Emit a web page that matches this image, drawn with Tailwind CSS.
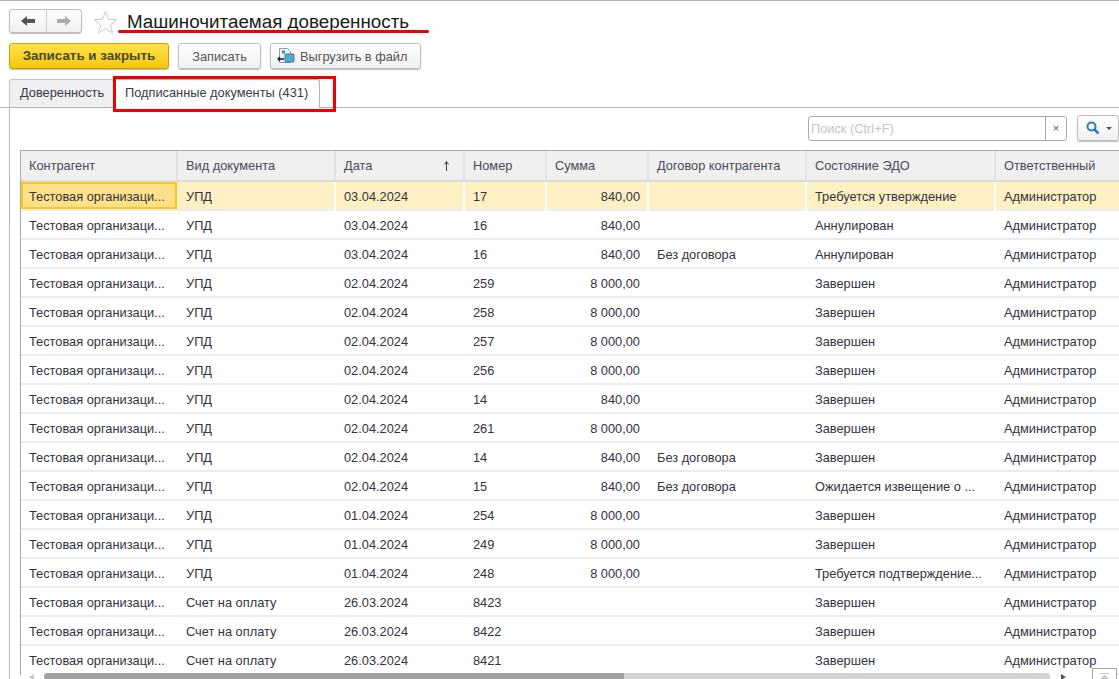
<!DOCTYPE html>
<html lang="en">
<head>
  <meta charset="UTF-8">
  <title>Машиночитаемая доверенность</title>
  <script src="https://cdn.jsdelivr.net/npm/@tailwindcss/browser@4"></script>
</head>
<body class="w-[1119px] h-[679px] overflow-hidden bg-white text-[12.8px] text-[#3a3a48] font-['Liberation_Sans',Arial,sans-serif]">
  <div class="relative h-full border-t border-[#b0b0b0]">
    <!-- Title row -->
    <div class="flex items-start pl-[9px] pt-[8px] h-[42px]">
      <div class="flex w-[73px] h-[24px] border border-[#bdbdbd] rounded-[3px] shadow-[0_1px_1px_#bbb] bg-gradient-to-b from-white to-[#f0f0f0]">
        <div class="w-[37px] flex items-center justify-center border-r border-[#cfcfcf]">
          <svg width="16" height="12" viewBox="0 0 16 12"><path d="M1 6l6-5v3h8v4H7v3z" fill="#555"/></svg>
        </div>
        <div class="flex-1 flex items-center justify-center">
          <svg width="16" height="12" viewBox="0 0 16 12"><path d="M15 6L9 1v3H1v4h8v3z" fill="#aaa"/></svg>
        </div>
      </div>
      <svg class="ml-[11px] mt-px" width="25" height="24" viewBox="0 0 25 24"><path d="M12.500 1.500l3 7.700 8.300.5-6.400 5.200 2.100 8-7-4.400-7 4.400 2.100-8L1.200 9.700l8.300-.5z" fill="#fff" stroke="#c9c9c9"/></svg>
      <h1 class="ml-[9px] text-[18.800px] leading-[26px] text-[#1a1a1a]">Машиночитаемая доверенность</h1>
    </div>

    <!-- Command bar -->
    <div class="flex items-center pl-[9px] h-[26px]">
      <button class="w-[160px] h-[26px] pt-px rounded-[3px] border border-[#c9a400] bg-gradient-to-b from-[#ffe347] to-[#f5c800] font-bold text-[13.400px] text-[#4a4a2a] shadow-[0_1px_1px_#bbb]">Записать и закрыть</button>
      <button class="ml-[9px] w-[83px] h-[26px] pt-px rounded-[3px] border border-[#bdbdbd] bg-gradient-to-b from-white to-[#f0f0f0] shadow-[0_1px_1px_#bbb] text-[#555]">Записать</button>
      <button class="ml-[9px] w-[151px] h-[26px] rounded-[3px] border border-[#bdbdbd] bg-gradient-to-b from-white to-[#f0f0f0] shadow-[0_1px_1px_#bbb] flex items-center pl-[6px] gap-[5px] whitespace-nowrap text-[#555]">
        <svg width="18" height="18" viewBox="0 0 18 18">
          <path d="M2.500 1.500h8l3 3v11h-11z" fill="#eef3f8" stroke="#8a9bb0"/>
          <rect x="8" y="7" width="9" height="8" rx="1" fill="#5aa7d6" stroke="#2f78a8"/>
          <path d="M1 12h6M3 10l-2 2 2 2" fill="none" stroke="#222" stroke-width="1.300"/>
          <path d="M5 3.500h3v3H5z" fill="#4aa04a"/>
        </svg>
        <span class="pt-px">Выгрузить в файл</span>
      </button>
    </div>

    <!-- Tabs -->
    <div class="flex items-end pl-[9px] mt-[9px] h-[30px] border-b border-[#b5b5b5]">
      <div class="w-[105px] h-[28px] flex items-center pl-[10px] pb-[2px] border border-b-0 border-[#c4c4c4] rounded-t-[3px] bg-[#f0f0f0] whitespace-nowrap">Доверенность</div>
      <div class="w-[206px] h-[29px] -mb-px flex items-center pl-[10px] pb-[2px] border border-b-0 border-[#b5b5b5] rounded-t-[3px] bg-white whitespace-nowrap">Подписанные документы (431)</div>
    </div>

    <!-- Tab panel -->
    <div class="ml-[9px] h-[572px] border-l border-[#b5b5b5] pl-[10px]">
      <div class="flex items-center justify-end h-[42px] pb-[2px]">
        <div class="flex w-[259px] h-[25px] border border-[#aaa] rounded-[3px]">
          <span class="flex-1 pl-[2px] leading-[23px] text-[#c4c4cc]">Поиск (Ctrl+F)</span>
          <span class="w-[21px] border-l border-[#aaa] flex items-center justify-center text-[#555] text-[11px]">×</span>
        </div>
        <div class="ml-[10px] w-[42px] h-[26px] rounded-[3px] border border-[#bdbdbd] bg-gradient-to-b from-white to-[#f0f0f0] shadow-[0_1px_1px_#bbb] flex items-center pl-[8px] gap-[6px]">
          <svg width="14" height="14" viewBox="0 0 14 14"><circle cx="5.500" cy="5.500" r="4" fill="none" stroke="#1f7fc0" stroke-width="2"/><path d="M8.500 8.500l4 4" stroke="#1f7fc0" stroke-width="2.500"/></svg>
          <svg width="6" height="3" viewBox="0 0 6 3"><path d="M0 0h6L3 3z" fill="#555"/></svg>
        </div>
      </div>

      <!-- Table -->
      <div class="border-t border-l border-[#a8a8a8] overflow-hidden text-[#333340]">
        <div class="grid grid-cols-[157px_158px_129px_82px_102px_158px_189px_140px] h-[31px] bg-[#f0f0f0] border-b-2 border-[#dcdcdc] text-[#4a4a58]">
          <div class="pl-[8px] leading-[29px] border-r-2 border-[#e2e2e2]">Контрагент</div>
          <div class="pl-[8px] leading-[29px] border-r-2 border-[#e2e2e2]">Вид документа</div>
          <div class="pl-[8px] pr-[14px] leading-[29px] border-r-2 border-[#e2e2e2] flex justify-between items-center">Дата
            <svg width="5" height="10" viewBox="0 0 5 10"><path d="M2.500 10V1M.5 3.500L2.500 .5l2 3" fill="none" stroke="#444"/></svg>
          </div>
          <div class="pl-[8px] leading-[29px] border-r-2 border-[#e2e2e2]">Номер</div>
          <div class="pl-[8px] leading-[29px] border-r-2 border-[#e2e2e2]">Сумма</div>
          <div class="pl-[8px] leading-[29px] border-r-2 border-[#e2e2e2]">Договор контрагента</div>
          <div class="pl-[8px] leading-[29px] border-r-2 border-[#e2e2e2]">Состояние ЭДО</div>
          <div class="pl-[8px] leading-[29px]">Ответственный</div>
        </div>
        <div id="rows"></div>
      </div>
    </div>

    <!-- Red annotations -->
    <div class="absolute left-[118px] top-[29px] w-[311px] h-[3px] bg-[#f00000] rounded-full"></div>
    <div class="absolute left-[113px] top-[75px] w-[223px] h-[36px] border-[3px] border-[#f00000]"></div>

    <!-- Horizontal scrollbar -->
    <div class="absolute left-[21px] top-[672px] w-[1072px] h-[7px] bg-white">
      <svg class="absolute left-[8px] top-[1px]" width="5" height="6" viewBox="0 0 5 6"><path d="M5 0v6L0 3z" fill="#c8c8c8"/></svg>
      <div class="absolute left-[23px] top-0 w-[580px] h-[7px] bg-[#a0a0a0] rounded-l-[4px]"></div>
      <div class="absolute left-[603px] top-0 w-[426px] h-[7px] bg-[#d2d2d2] rounded-r-[4px]"></div>
      <svg class="absolute left-[1040px] top-[1px]" width="5" height="6" viewBox="0 0 5 6"><path d="M0 0v6l5-3z" fill="#555"/></svg>
    </div>
    <div class="absolute left-[1092px] top-[667px] w-[25px] h-[12px] bg-white border border-b-0 border-[#a8a8a8] flex justify-center pt-[4px]">
      <svg width="11" height="8" viewBox="0 0 11 8"><path d="M1 .5h9M5.500 2L1 7h9z" fill="#c8c8c8" stroke="#c8c8c8"/></svg>
    </div>
  </div>

  <script>
    const org = 'Тестовая организаци...'
    const rows = [
      ['УПД', '03.04.2024', '17', '840,00', '', 'Требуется утверждение'],
      ['УПД', '03.04.2024', '16', '840,00', '', 'Аннулирован'],
      ['УПД', '03.04.2024', '16', '840,00', 'Без договора', 'Аннулирован'],
      ['УПД', '02.04.2024', '259', '8 000,00', '', 'Завершен'],
      ['УПД', '02.04.2024', '258', '8 000,00', '', 'Завершен'],
      ['УПД', '02.04.2024', '257', '8 000,00', '', 'Завершен'],
      ['УПД', '02.04.2024', '256', '8 000,00', '', 'Завершен'],
      ['УПД', '02.04.2024', '14', '840,00', '', 'Завершен'],
      ['УПД', '02.04.2024', '261', '8 000,00', '', 'Завершен'],
      ['УПД', '02.04.2024', '14', '840,00', 'Без договора', 'Завершен'],
      ['УПД', '02.04.2024', '15', '840,00', 'Без договора', 'Ожидается извещение о ...'],
      ['УПД', '01.04.2024', '254', '8 000,00', '', 'Завершен'],
      ['УПД', '01.04.2024', '249', '8 000,00', '', 'Завершен'],
      ['УПД', '01.04.2024', '248', '8 000,00', '', 'Требуется подтверждение...'],
      ['Счет на оплату', '26.03.2024', '8423', '', '', 'Завершен'],
      ['Счет на оплату', '26.03.2024', '8422', '', '', 'Завершен'],
      ['Счет на оплату', '26.03.2024', '8421', '', '', 'Завершен'],
    ]
    document.getElementById('rows').innerHTML = rows.map((r, i) => {
      const first = i === 0
      const rowCls = first ? 'bg-[#fdf1c3]' : ''
      const sep = first ? 'border-r-2 border-white' : 'border-r-2 border-transparent'
      const orgCls = first
        ? 'w-[156px] pl-[6px] leading-[26px] h-[27px] border-2 border-[#f9c918] bg-[#fde18a]'
        : 'pl-[8px] leading-[30px]'
      return `
        <div class="grid grid-cols-[157px_158px_129px_82px_102px_158px_189px_140px] h-[29px] border-b-2 border-[#ececec] ${rowCls}">
          <div class="${orgCls} whitespace-nowrap">${org}</div>
          <div class="pl-[8px] leading-[30px] ${sep}">${r[0]}</div>
          <div class="pl-[8px] leading-[30px] ${sep}">${r[1]}</div>
          <div class="pl-[8px] leading-[30px] ${sep}">${r[2]}</div>
          <div class="pr-[7px] leading-[30px] text-right ${sep}">${r[3]}</div>
          <div class="pl-[8px] leading-[30px] ${sep}">${r[4]}</div>
          <div class="pl-[8px] leading-[30px] whitespace-nowrap ${sep}">${r[5]}</div>
          <div class="pl-[8px] leading-[30px]">Администратор</div>
        </div>`
    }).join('')
  </script>
</body>
</html>
